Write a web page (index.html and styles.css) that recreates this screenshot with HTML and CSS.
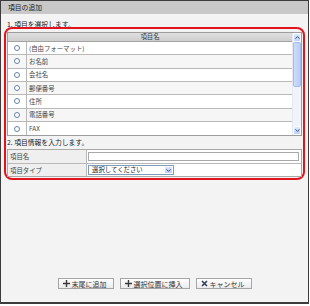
FILE: index.html
```html
<!DOCTYPE html>
<html lang="ja">
<head>
    <meta charset="UTF-8">
    <title>項目の追加</title>
    <link rel="stylesheet" href="styles.css">
</head>
<body>
    <div class="window">
        <div class="titlebar">項目の追加</div>
        <div class="content">
            <p class="step step-first">1. 項目を選択します。</p>
            <div class="frame">
                <div class="listbox">
                    <div class="list">
                        <div class="list-head">項目名</div>
                        <div class="row"><div class="cell-radio"><span class="radio"></span></div><div class="cell-name">(自由フォーマット)</div></div>
                        <div class="row"><div class="cell-radio"><span class="radio"></span></div><div class="cell-name">お名前</div></div>
                        <div class="row"><div class="cell-radio"><span class="radio"></span></div><div class="cell-name">会社名</div></div>
                        <div class="row"><div class="cell-radio"><span class="radio"></span></div><div class="cell-name">郵便番号</div></div>
                        <div class="row"><div class="cell-radio"><span class="radio"></span></div><div class="cell-name">住所</div></div>
                        <div class="row"><div class="cell-radio"><span class="radio"></span></div><div class="cell-name">電話番号</div></div>
                        <div class="row"><div class="cell-radio"><span class="radio"></span></div><div class="cell-name">FAX</div></div>
                    </div>
                    <div class="scrollbar">
                        <div class="sb-btn">
                            <svg width="5" height="3" viewBox="0 0 5 3"><path d="M0.5 2.6 L2.5 0.6 L4.5 2.6" fill="none" stroke="#2c4a86" stroke-width="1"/></svg>
                        </div>
                        <div class="sb-track"><div class="sb-thumb"></div></div>
                        <div class="sb-btn">
                            <svg width="5" height="3" viewBox="0 0 5 3"><path d="M0.5 0.4 L2.5 2.4 L4.5 0.4" fill="none" stroke="#2c4a86" stroke-width="1"/></svg>
                        </div>
                    </div>
                </div>
                <p class="step">2. 項目情報を入力します。</p>
                <div class="form">
                    <div class="frow">
                        <div class="flabel">項目名</div>
                        <div class="fvalue"><input class="text-input" type="text"></div>
                    </div>
                    <div class="frow">
                        <div class="flabel">項目タイプ</div>
                        <div class="fvalue">
                            <div class="select">
                                <span class="select-text">選択してください</span>
                                <span class="select-arrow">
                                    <svg width="5" height="3" viewBox="0 0 5 3"><path d="M0.5 0.4 L2.5 2.4 L4.5 0.4" fill="none" stroke="#2c4a86" stroke-width="1"/></svg>
                                </span>
                            </div>
                        </div>
                    </div>
                </div>
            </div>
            <div class="actions">
                <button class="btn btn-add">
                    <svg width="7" height="7" viewBox="0 0 7 7"><path d="M3.5 0 V7 M0 3.5 H7" stroke="#3a3a3a" stroke-width="1.4"/></svg>
                    末尾に追加
                </button>
                <button class="btn btn-insert">
                    <svg width="7" height="7" viewBox="0 0 7 7"><path d="M3.5 0 V7 M0 3.5 H7" stroke="#3a3a3a" stroke-width="1.4"/></svg>
                    選択位置に挿入
                </button>
                <button class="btn btn-cancel">
                    <svg width="7" height="7" viewBox="0 0 7 7"><path d="M1 1 L6 6 M6 1 L1 6" stroke="#2d3c5c" stroke-width="1.6"/></svg>
                    キャンセル
                </button>
            </div>
        </div>
    </div>
</body>
</html>
```
FILE: styles.css
```css
* {
    box-sizing: border-box;
}
body {
    margin: 0;
    width: 310px;
    height: 306px;
    background: #fff;
    font-family: "Noto Sans CJK JP", "Noto Sans", sans-serif;
    font-size: 6.4px;
    color: #333;
}
.window {
    width: 309px;
    height: 304px;
    border: 1px solid #3c3c3c;
    border-bottom-width: 2px;
    display: flex;
    flex-direction: column;
    background: #f3f3f3;
}
.titlebar {
    height: 14px;
    line-height: 13px;
    padding-left: 7px;
    background: #c8c8c8;
    border-bottom: 1px solid #f6f6f6;
    color: #222;
    font-size: 6.8px;
}
.content {
    flex: 1;
    display: flex;
    flex-direction: column;
    padding: 0 3px 13px 3px;
}
.step {
    margin: 0;
    line-height: 8px;
    padding: 2px 0 3px 0;
    color: #222;
    font-size: 6.8px;
}
.step-first {
    padding: 5px 0 0 3px;
    margin-bottom: -1px;
}
.frame {
    border: 2px solid #e1141c;
    border-radius: 8px;
    padding: 3px 1px 1px 1px;
}
.listbox {
    display: flex;
    border: 1px solid #9d9d9d;
    background: #fff;
}
.list {
    flex: 1;
}
.list-head {
    height: 9px;
    line-height: 8px;
    text-align: center;
    background: linear-gradient(#e0e0e0, #cecece);
    border-bottom: 1px solid #a4a4a4;
    color: #333;
}
.row {
    display: flex;
    align-items: center;
    height: 13.33px;
    border-bottom: 1px solid #b9b9b9;
}
.row:nth-child(odd) {
    background: #f6f6f6;
}
.row:last-child {
    border-bottom: none;
}
.cell-radio {
    width: 19px;
    height: 100%;
    border-right: 1px solid #b9b9b9;
    display: flex;
    align-items: center;
    justify-content: center;
}
.radio {
    width: 6px;
    height: 6px;
    border: 1px solid #6583a6;
    border-radius: 50%;
    background: #fff;
}
.cell-name {
    padding-left: 2px;
    color: #444;
}
.scrollbar {
    width: 9px;
    display: flex;
    flex-direction: column;
    background: #f0f3fa;
    border-left: 1px solid #e3e8f3;
}
.sb-btn {
    height: 9px;
    display: flex;
    align-items: center;
    justify-content: center;
    background: linear-gradient(#dce7fd, #bccff6);
    border: 1px solid #fff;
    border-radius: 2px;
}
.sb-track {
    flex: 1;
}
.sb-thumb {
    height: 45px;
    background: linear-gradient(90deg, #cddcfb, #b9cdf6);
    border: 1px solid #a5bbe8;
    border-radius: 2px;
}
.form {
    border: 1px solid #a9a9a9;
    background: #fff;
}
.frow {
    display: flex;
    height: 13px;
}
.frow + .frow {
    border-top: 1px solid #b9b9b9;
}
.flabel {
    width: 79px;
    line-height: 13px;
    padding-left: 2px;
    background: #efefef;
    border-right: 1px solid #b9b9b9;
    color: #444;
}
.fvalue {
    flex: 1;
    display: flex;
    align-items: center;
    padding: 0 2px 0 1px;
}
.text-input {
    width: 100%;
    height: 9px;
    margin: 0;
    padding: 0;
    border: 1px solid #a9a9a9;
    background: #fff;
}
.select {
    width: 86px;
    height: 10px;
    display: flex;
    align-items: center;
    border: 1px solid #7f9db9;
    background: #fff;
}
.select-text {
    flex: 1;
    padding-left: 3px;
    line-height: 8px;
    color: #222;
}
.select-arrow {
    width: 9px;
    height: 8px;
    display: flex;
    align-items: center;
    justify-content: center;
    background: linear-gradient(#dce7fd, #bccff6);
    border: 1px solid #fff;
    border-radius: 1px;
}
.actions {
    margin-top: auto;
    display: flex;
    justify-content: center;
    gap: 6px;
}
.btn {
    height: 11px;
    display: flex;
    align-items: center;
    gap: 2px;
    margin: 0;
    padding: 0 0 0 4px;
    border: 1px solid #a6a6a6;
    background: linear-gradient(#ffffff, #ebebeb);
    font-family: inherit;
    font-size: 7px;
    color: #333;
}
.btn-add {
    width: 56px;
}
.btn-insert {
    width: 70px;
}
.btn-cancel {
    width: 56px;
}
```
